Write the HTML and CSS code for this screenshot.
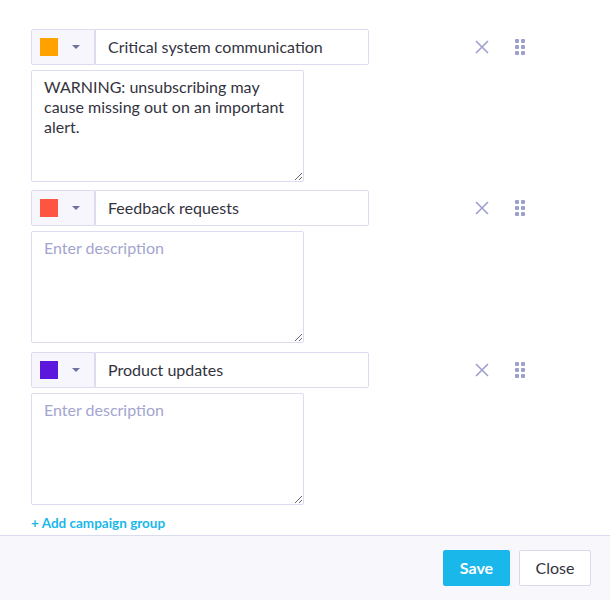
FILE: index.html
```html
<!DOCTYPE html>
<html>
<head>
<meta charset="utf-8">
<link rel="stylesheet" href="styles.css">
</head>
<body>
<div class="page">
  <div class="content">
    <div class="group">
      <div class="row">
        <button class="color-btn"><span class="swatch orange"></span><span class="caret"></span></button>
        <input class="name" type="text" value="Critical system communication" spellcheck="false">
        <span class="icon-x"><svg width="14" height="14" viewBox="0 0 14 14"><path d="M1 1L13 13M13 1L1 13" stroke="#9d9fcc" stroke-width="1.6" fill="none"/></svg></span>
        <span class="handle"><svg width="10" height="16" viewBox="0 0 10 16"><g fill="#9d9fcc"><rect x="0" y="0" width="4" height="4" rx="1"/><rect x="6" y="0" width="4" height="4" rx="1"/><rect x="0" y="6" width="4" height="4" rx="1"/><rect x="6" y="6" width="4" height="4" rx="1"/><rect x="0" y="12" width="4" height="4" rx="1"/><rect x="6" y="12" width="4" height="4" rx="1"/></g></svg></span>
      </div>
      <textarea class="desc" placeholder="Enter description" spellcheck="false">WARNING: unsubscribing may cause missing out on an important alert.</textarea>
    </div>
    <div class="group">
      <div class="row">
        <button class="color-btn"><span class="swatch red"></span><span class="caret"></span></button>
        <input class="name" type="text" value="Feedback requests" spellcheck="false">
        <span class="icon-x"><svg width="14" height="14" viewBox="0 0 14 14"><path d="M1 1L13 13M13 1L1 13" stroke="#9d9fcc" stroke-width="1.6" fill="none"/></svg></span>
        <span class="handle"><svg width="10" height="16" viewBox="0 0 10 16"><g fill="#9d9fcc"><rect x="0" y="0" width="4" height="4" rx="1"/><rect x="6" y="0" width="4" height="4" rx="1"/><rect x="0" y="6" width="4" height="4" rx="1"/><rect x="6" y="6" width="4" height="4" rx="1"/><rect x="0" y="12" width="4" height="4" rx="1"/><rect x="6" y="12" width="4" height="4" rx="1"/></g></svg></span>
      </div>
      <textarea class="desc" placeholder="Enter description"></textarea>
    </div>
    <div class="group">
      <div class="row">
        <button class="color-btn"><span class="swatch purple"></span><span class="caret"></span></button>
        <input class="name" type="text" value="Product updates" spellcheck="false">
        <span class="icon-x"><svg width="14" height="14" viewBox="0 0 14 14"><path d="M1 1L13 13M13 1L1 13" stroke="#9d9fcc" stroke-width="1.6" fill="none"/></svg></span>
        <span class="handle"><svg width="10" height="16" viewBox="0 0 10 16"><g fill="#9d9fcc"><rect x="0" y="0" width="4" height="4" rx="1"/><rect x="6" y="0" width="4" height="4" rx="1"/><rect x="0" y="6" width="4" height="4" rx="1"/><rect x="6" y="6" width="4" height="4" rx="1"/><rect x="0" y="12" width="4" height="4" rx="1"/><rect x="6" y="12" width="4" height="4" rx="1"/></g></svg></span>
      </div>
      <textarea class="desc" placeholder="Enter description"></textarea>
    </div>
    <a class="add-link" href="#">+ Add campaign group</a>
  </div>
  <div class="footer">
    <button class="btn btn-save">Save</button>
    <button class="btn btn-close">Close</button>
  </div>
</div>
</body>
</html>
```
FILE: styles.css
```css
html, body {
  margin: 0;
  padding: 0;
  background: #ffffff;
  font-family: Lato, "Open Sans", sans-serif;
  color: #333340;
}
.page {
  width: 610px;
  height: 600px;
  display: flex;
  flex-direction: column;
}
.content {
  flex: 1;
  padding: 29px 0 0 31px;
  display: flex;
  flex-direction: column;
}
.group {
  display: flex;
  flex-direction: column;
  margin-bottom: 9px;
}
.group:first-child {
  margin-bottom: 8px;
}
.row {
  display: flex;
  align-items: center;
  height: 36px;
}
.color-btn {
  box-sizing: border-box;
  width: 64px;
  height: 36px;
  margin: 0;
  padding: 0 0 0 8px;
  background: #f7f6fc;
  border: 1px solid #dcdcf0;
  border-radius: 2px 0 0 2px;
  display: flex;
  align-items: center;
  cursor: pointer;
}
.swatch {
  width: 18px;
  height: 18px;
  display: block;
}
.orange { background: #ffa200; }
.red { background: #fd5542; }
.purple { background: #5b17dc; }
.caret {
  margin-left: 14px;
  width: 0;
  height: 0;
  border-left: 4px solid transparent;
  border-right: 4px solid transparent;
  border-top: 4px solid #6f70a0;
}
.name {
  box-sizing: border-box;
  width: 274px;
  height: 36px;
  margin: 0;
  padding: 0 12px 2px;
  border: 1px solid #dcdcf0;
  border-radius: 0 2px 2px 0;
  font-family: Lato, "Open Sans", sans-serif;
  font-size: 16px;
  color: #333340;
  outline: none;
}
.icon-x {
  margin-left: 106px;
  width: 14px;
  height: 14px;
  display: flex;
}
.handle {
  margin-left: 26px;
  width: 10px;
  height: 16px;
  display: flex;
}
.desc {
  box-sizing: border-box;
  width: 273px;
  height: 112px;
  margin: 5px 0 0 0;
  padding: 6px 12px;
  border: 1px solid #dcdcf0;
  border-radius: 2px;
  font-family: Lato, "Open Sans", sans-serif;
  font-size: 16px;
  line-height: 20px;
  color: #333340;
  resize: vertical;
  outline: none;
  display: block;
}
.desc::placeholder {
  color: #a3a5cf;
}
.add-link {
  margin-top: 1px;
  font-size: 13.5px;
  font-weight: bold;
  color: #1ab7ea;
  text-decoration: none;
  line-height: 16px;
}
.footer {
  height: 65px;
  box-sizing: border-box;
  border-top: 1px solid #dcdcf0;
  background: #f8f7fc;
  display: flex;
  justify-content: flex-end;
  align-items: flex-start;
  padding: 14px 19px 0 0;
  gap: 9px;
}
.btn {
  height: 36px;
  box-sizing: border-box;
  font-family: Lato, "Open Sans", sans-serif;
  font-size: 16px;
  border-radius: 2px;
  margin: 0;
  padding: 0 0 2px;
  cursor: pointer;
}
.btn-save {
  width: 67px;
  background: #1ab7ea;
  border: 1px solid #1ab7ea;
  color: #ffffff;
  font-weight: bold;
}
.btn-close {
  width: 72px;
  background: #ffffff;
  border: 1px solid #d8d9ec;
  color: #333340;
}
```
